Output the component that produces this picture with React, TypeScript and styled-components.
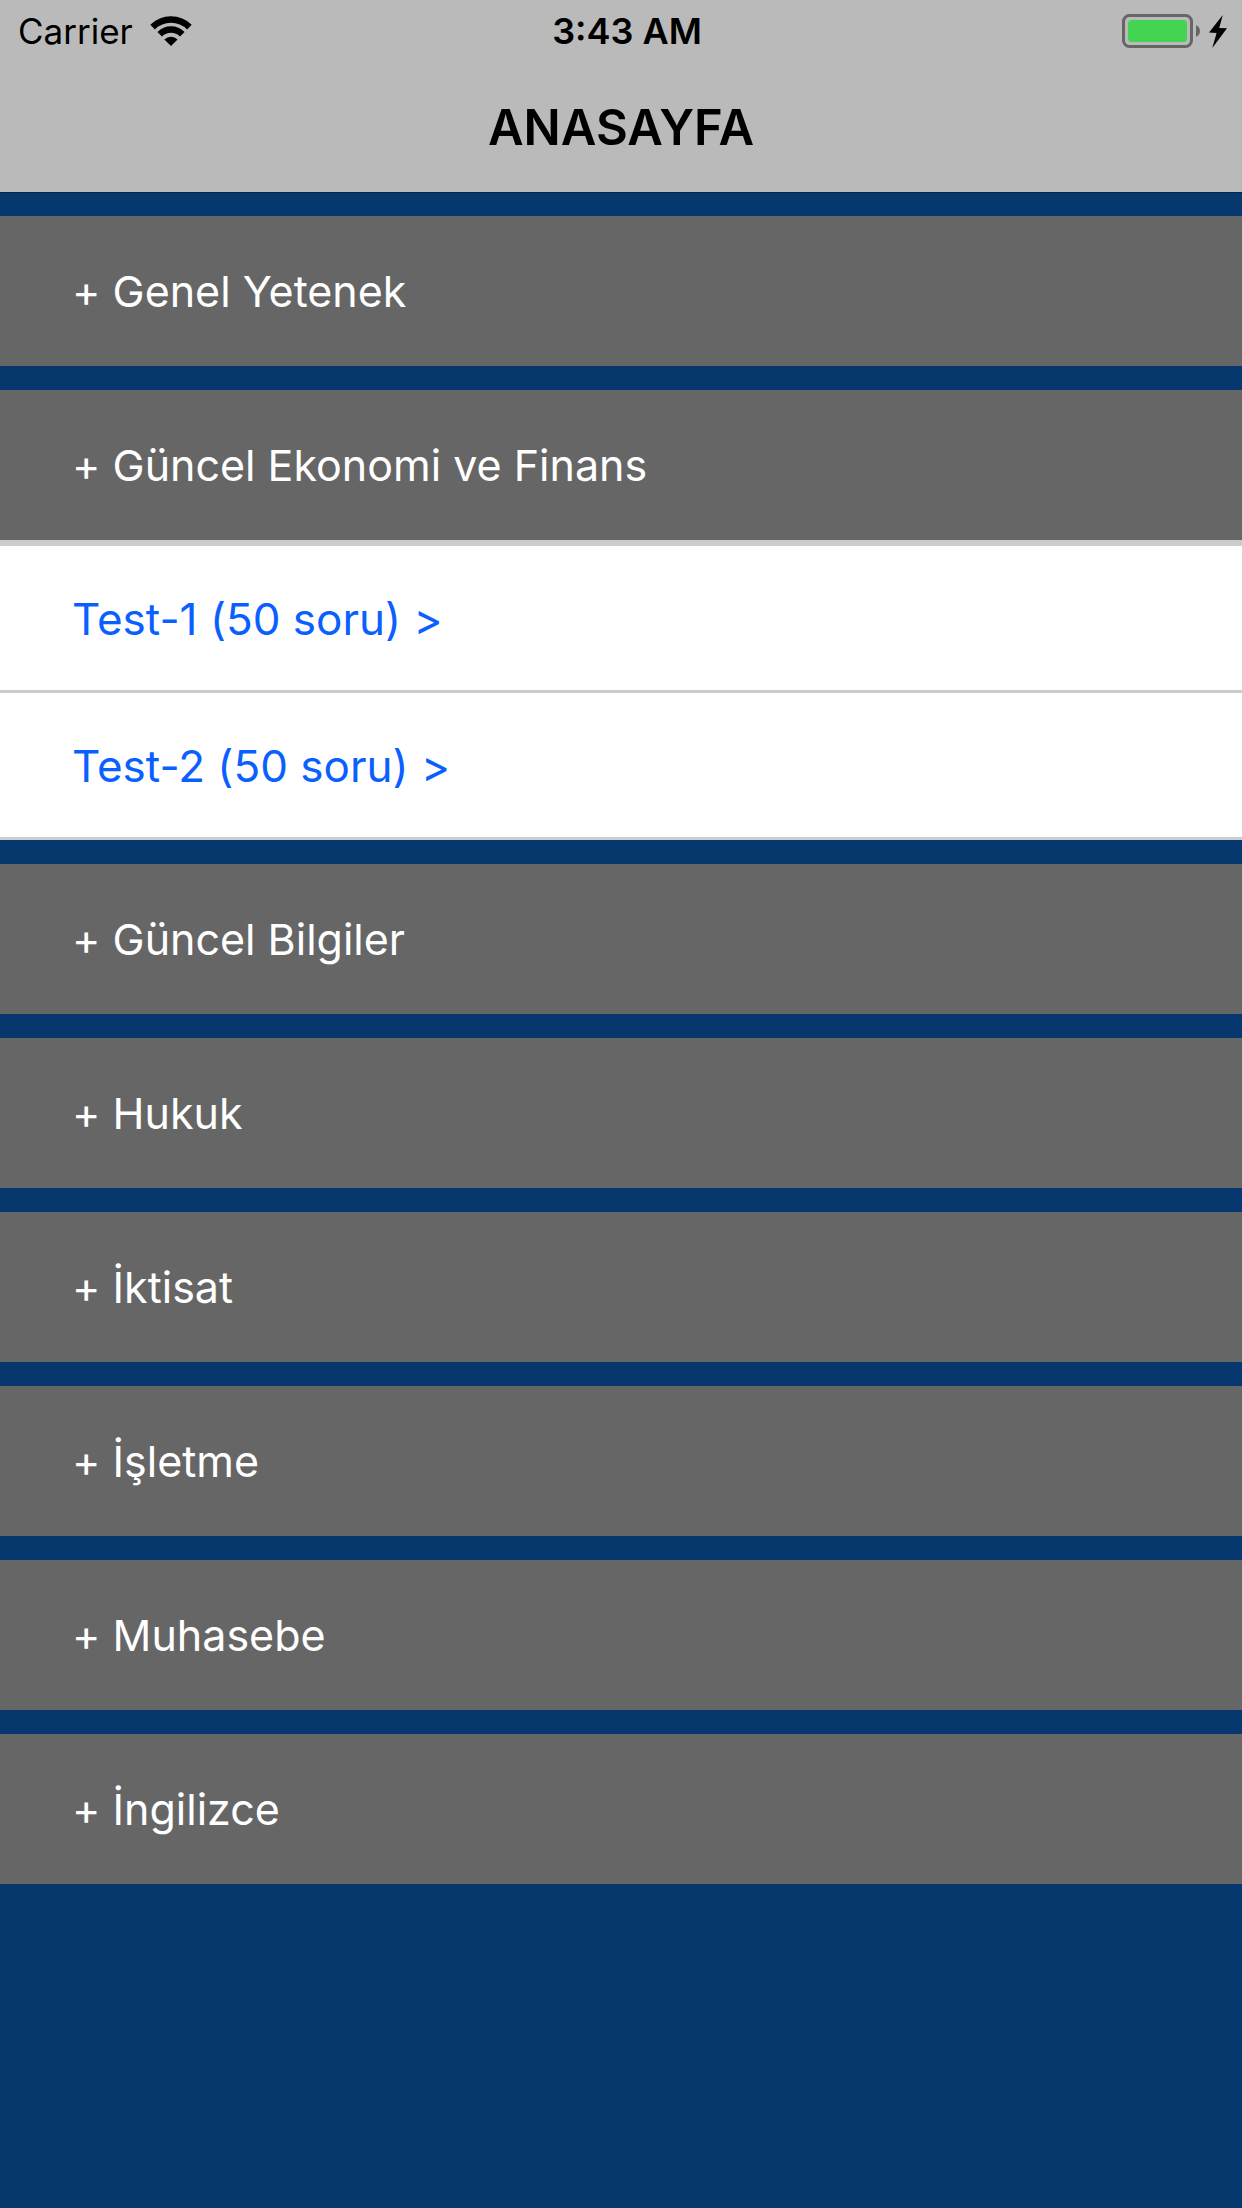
import { useState } from "react";
import styled, { createGlobalStyle } from "styled-components";

const GlobalStyle = createGlobalStyle`
  * {
    box-sizing: border-box;
  }

  body {
    margin: 0;
    background: #06386d;
    font-family: Inter, "Liberation Sans", sans-serif;
  }
`;

const Screen = styled.div`
  display: flex;
  flex-direction: column;
  min-height: 100vh;
  background: #06386d;
`;

const Header = styled.header`
  background: #bababa;
  border-bottom: 1px solid #04264a;
  color: #000;
`;

const StatusBar = styled.div`
  display: grid;
  grid-template-columns: 1fr auto 1fr;
  align-items: center;
  height: 62px;
  padding: 0 6px 0 18px;
  font-size: 35px;
  line-height: 42px;
`;

const Network = styled.div`
  display: flex;
  align-items: center;
  gap: 17px;
`;

const Clock = styled.time`
  font-size: 36px;
  font-weight: 600;
`;

const Power = styled.div`
  display: flex;
  justify-content: flex-end;
`;

const Title = styled.h1`
  margin: 0;
  padding: 36px 24px 34px;
  font-size: 49px;
  font-weight: 600;
  line-height: 60px;
  text-align: center;
`;

const SectionList = styled.main`
  display: flex;
  flex-direction: column;
  gap: 24px;
  padding: 23px 0 24px;
  font-variant-ligatures: no-contextual;
`;

const SectionButton = styled.button`
  display: block;
  width: 100%;
  padding: 48px 72px;
  border: 0;
  background: #666;
  color: #fff;
  font: inherit;
  font-size: 43px;
  font-variant-ligatures: no-contextual;
  line-height: 54px;
  text-align: left;
  cursor: pointer;
`;

const TestList = styled.ul`
  margin: 0;
  padding: 0;
  border-top: 6px solid #ccc;
  list-style: none;
`;

const TestItem = styled.li`
  border-bottom: 3px solid #ccc;
  background: #fff;
`;

const TestLink = styled.a`
  display: block;
  padding: 46px 72px 44px;
  color: #0a60ff;
  font-size: 44px;
  line-height: 54px;
  text-decoration: none;
`;

type SectionData = { title: string; tests: string[] };

const sections: SectionData[] = [
  { title: "Genel Yetenek", tests: [] },
  { title: "Güncel Ekonomi ve Finans", tests: ["Test-1 (50 soru)", "Test-2 (50 soru)"] },
  { title: "Güncel Bilgiler", tests: [] },
  { title: "Hukuk", tests: [] },
  { title: "İktisat", tests: [] },
  { title: "İşletme", tests: [] },
  { title: "Muhasebe", tests: [] },
  { title: "İngilizce", tests: [] },
];

function WifiIcon() {
  return (
    <svg width="42" height="30" viewBox="0 0 42 30" aria-hidden="true">
      <path d="M2.6 11.1 A26 26 0 0 1 39.4 11.1" fill="none" stroke="#000" strokeWidth="6.5" />
      <path d="M9.7 18.2 A16 16 0 0 1 32.3 18.2" fill="none" stroke="#000" strokeWidth="6.5" />
      <path d="M14.4 23.4 A9.3 9.3 0 0 1 27.6 23.4 L21 30 Z" />
    </svg>
  );
}

function BatteryIcon() {
  return (
    <svg width="114" height="34" viewBox="0 0 114 34" aria-hidden="true">
      <rect x="1.5" y="1.5" width="68" height="31" rx="6" fill="none" stroke="#666" strokeWidth="3" />
      <rect x="6" y="6" width="59" height="22" rx="3.5" fill="#43d551" />
      <path d="M74 11 Q78 13 78 17 Q78 21 74 23 Z" fill="#666" />
      <path d="M100.8 1 L87 18.6 L94.6 19 L90.3 34 L105 14.2 L97.2 14 Z" />
    </svg>
  );
}

function Section({ title, tests }: SectionData) {
  const [open, setOpen] = useState(tests.length > 0);
  return (
    <section>
      <SectionButton type="button" aria-expanded={open} onClick={() => setOpen(!open)}>
        + {title}
      </SectionButton>
      {open && tests.length > 0 && (
        <TestList>
          {tests.map((test) => (
            <TestItem key={test}>
              <TestLink href="#">{test} &gt;</TestLink>
            </TestItem>
          ))}
        </TestList>
      )}
    </section>
  );
}

export default function App() {
  return (
    <Screen>
      <GlobalStyle />
      <Header>
        <StatusBar>
          <Network>
            Carrier
            <WifiIcon />
          </Network>
          <Clock>3:43 AM</Clock>
          <Power>
            <BatteryIcon />
          </Power>
        </StatusBar>
        <Title>ANASAYFA</Title>
      </Header>
      <SectionList>
        {sections.map((section) => (
          <Section key={section.title} {...section} />
        ))}
      </SectionList>
    </Screen>
  );
}
